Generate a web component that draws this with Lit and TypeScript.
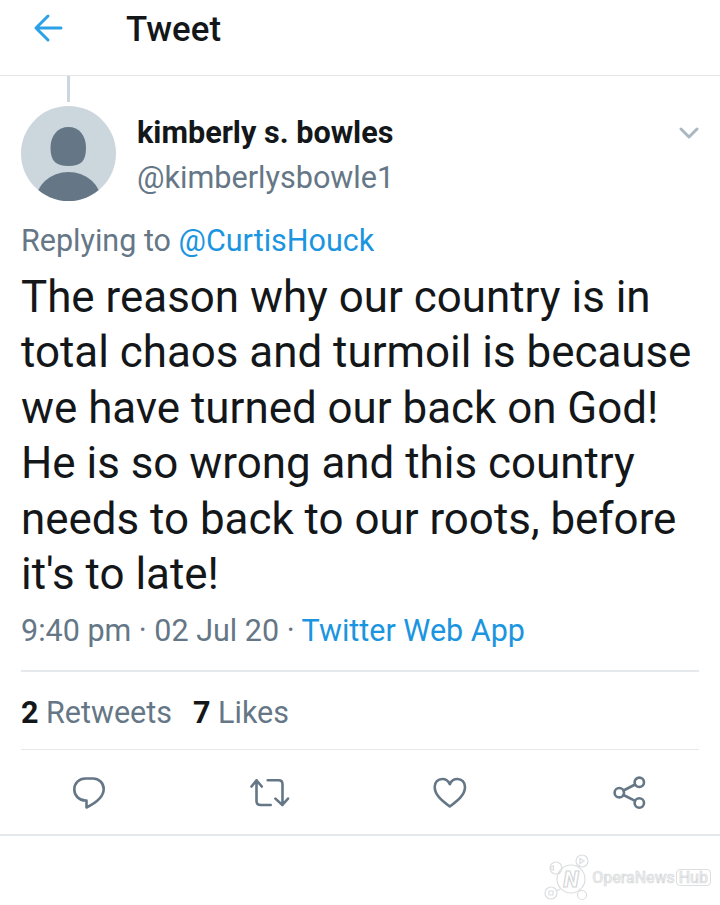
import { LitElement, html, css } from "lit";
import { customElement } from "lit/decorators.js";

@customElement("app-root")
export class AppRoot extends LitElement {
  static styles = css`
    :host {
      display: block;
      width: 720px;
      height: 905px;
      background: #fff;
      font-family: Roboto, "Liberation Sans", sans-serif;
      color: #14171a;
      overflow: hidden;
    }
    svg { display: block; }
    .header {
      height: 76px;
      box-sizing: border-box;
      display: flex;
      align-items: center;
      padding: 0 0 18px 33px;
      gap: 63px;
      border-bottom: 1.5px solid #e3e6e9;
    }
    .back { margin-bottom: 2px; }
    .title {
      font-size: 34.8px;
      font-weight: 500;
      line-height: 40px;
    }
    .thread { width: 3px; height: 26px; background: #ccd6dd; margin-left: 67px; }
    .author {
      display: flex;
      padding: 4px 20px 0 21px;
      height: 95px;
    }
    .avatar { width: 95px; height: 95px; flex: none; }
    .names { margin-left: 21px; flex: 1; padding-top: 7px; }
    .name { font-size: 30.6px; font-weight: 700; line-height: 40px; }
    .handle { font-size: 30.6px; line-height: 50px; color: #657786; }
    .chev { margin-top: 20px; margin-right: 1px; }
    .reply {
      margin: 20px 0 0 21px;
      font-size: 30.5px;
      line-height: 40px;
      color: #657786;
    }
    .link { color: #1b95e0; }
    .body {
      margin: 9px 0 0 21px;
      font-size: 43.9px;
      line-height: 55.4px;
      white-space: pre;
    }
    .meta {
      margin: 7px 0 0 21px;
      font-size: 30.5px;
      line-height: 44px;
      color: #657786;
    }
    .rule { height: 1.5px; background: #e6e9ec; margin: 0 21px; }
    .meta-rule { margin-top: 17px; }
    .stats {
      height: 77px;
      box-sizing: border-box;
      display: flex;
      align-items: center;
      gap: 21px;
      padding: 4px 0 0 21px;
      font-size: 30.5px;
      color: #657786;
    }
    .stats b { color: #14171a; font-weight: 700; }
    .actions {
      height: 84px;
      display: flex;
      align-items: center;
      justify-content: space-between;
      padding: 2px 55px 0 53px;
      box-sizing: border-box;
    }
    .actions svg { width: 74px; height: 36px; }
    .bottom { height: 1.5px; background: #e6e9ec; }
    .mark {
      display: flex;
      align-items: center;
      justify-content: flex-end;
      margin: 18px 9px 0 0;
      gap: 1px;
      color: #eceded;
      -webkit-text-stroke: 0.5px #d4d6d8;
      font-size: 16px;
      font-weight: 500;
    }
    .mark svg { margin-right: 1px; }
    .logo-n {
      font-family: Roboto, "Liberation Sans", sans-serif;
      font-size: 22px;
      font-weight: 900;
      font-style: italic;
      -webkit-text-stroke: 0;
    }
    .mark .hub {
      border: 1.5px solid #dcdee0;
      border-radius: 4px;
      padding: 0 2px;
      line-height: 15px;
    }
  `;

  render() {
    const stroke = "#657786";
    return html`
      <div class="header">
        <svg class="back" width="30" height="30" viewBox="0 0 30 30" fill="none" stroke="#2da1e6" stroke-width="3" stroke-linecap="round" stroke-linejoin="round">
          <path d="M3 15h25M15 3 3 15l12 12" />
        </svg>
        <div class="title">Tweet</div>
      </div>
      <div class="thread"></div>
      <div class="author">
        <svg class="avatar" viewBox="0 0 95 95">
          <defs><clipPath id="c"><circle cx="47.5" cy="47.5" r="47.5" /></clipPath></defs>
          <circle cx="47.5" cy="47.5" r="47.5" fill="#ccd6dd" />
          <g clip-path="url(#c)" fill="#657786">
            <path d="M47.500 21C58 21 65 29 65 42 65 55 60 60 47.500 60 35 60 29.500 55 29.500 42 29.500 29 37 21 47.500 21z" />
            <ellipse cx="47.5" cy="96" rx="33" ry="30" />
          </g>
        </svg>
        <div class="names">
          <div class="name">kimberly s. bowles</div>
          <div class="handle">@kimberlysbowle1</div>
        </div>
        <svg class="chev" width="20" height="14" viewBox="0 0 20 14" fill="none" stroke="#aab8c2" stroke-width="3" stroke-linecap="round" stroke-linejoin="round">
          <path d="M2 3l8 8 8-8" />
        </svg>
      </div>
      <div class="reply">Replying to <span class="link">@CurtisHouck</span></div>
      <div class="body">The reason why our country is in
total chaos and turmoil is because
we have turned our back on God!
He is so wrong and this country
needs to back to our roots, before
it's to late!</div>
      <div class="meta">9:40 pm · 02 Jul 20 · <span class="link">Twitter Web App</span></div>
      <div class="rule meta-rule"></div>
      <div class="stats">
        <span><b>2</b> Retweets</span>
        <span><b>7</b> Likes</span>
      </div>
      <div class="rule"></div>
      <div class="actions">
        <svg viewBox="0 0 74 36" fill="none" stroke="${stroke}" stroke-width="2.6" stroke-linecap="round" stroke-linejoin="round">
          <path d="M33.500 32.500V25.500h-1C26 25.500 21.300 20.500 21.300 14.500 21.300 8 26 3.500 32.500 3.500h7.500C46 3.500 50.700 8 50.700 14c0 7.500-6 13-17.200 18.500z" />
        </svg>
        <svg viewBox="0 0 74 36" fill="none" stroke="${stroke}" stroke-width="2.6" stroke-linecap="round" stroke-linejoin="round">
          <path d="M19.500 11.500l5-6.200 5.300 6.200M24.500 5.300V26c0 2.700 1.300 4 4 4h10.200M35.700 5.300h11c2.500 0 3.800 1.300 3.800 4V30M43.400 23.600l7 6.400 5.600-6.400" />
        </svg>
        <svg viewBox="0 0 74 36" fill="none" stroke="${stroke}" stroke-width="2.6" stroke-linecap="round" stroke-linejoin="round">
          <path d="M37.800 31.500C29 25 22.700 19.500 22.700 12c0-4.800 3.300-8 7.500-8 3.500 0 6.200 2 7.600 5.200C39.200 6 41.900 4 45.400 4 49.700 4 53 7.200 53 12c0 7.500-6.400 13-15.200 19.500z" />
        </svg>
        <svg viewBox="0 0 74 36" fill="none" stroke="${stroke}" stroke-width="2.6" stroke-linecap="round" stroke-linejoin="round">
          <circle cx="28.300" cy="17.700" r="4.700" />
          <circle cx="48.300" cy="7.300" r="4.700" />
          <circle cx="48.300" cy="28" r="4.700" />
          <path d="M32.500 15.500l11.600-6M32.500 20l11.600 5.800" />
        </svg>
      </div>
      <div class="bottom"></div>
      <div class="mark">
        <svg width="46" height="47" viewBox="0 0 46 47" fill="none" stroke="#dcdee0" stroke-width="1.200">
          <circle cx="27" cy="25" r="14" />
          <path d="M16 20l-2-2M34 13l2-2M16 35l-3 2M35 35l1 1" />
          <circle cx="12" cy="14" r="6" />
          <circle cx="38" cy="7" r="6" />
          <circle cx="7" cy="39" r="6" />
          <circle cx="38" cy="41" r="4.500" />
          <path d="M36 4.500l4 2.500-4 2.500zM9.500 12v4l-3-1.200v-1.600z" />
          <path d="M5 37h4v4H5z" />
          <text class="logo-n" x="27" y="33" text-anchor="middle" fill="#fff" stroke="#d4d6d8" stroke-width="1.200">N</text>
        </svg>
        <span>OperaNews</span><span class="hub">Hub</span>
      </div>
    `;
  }
}
